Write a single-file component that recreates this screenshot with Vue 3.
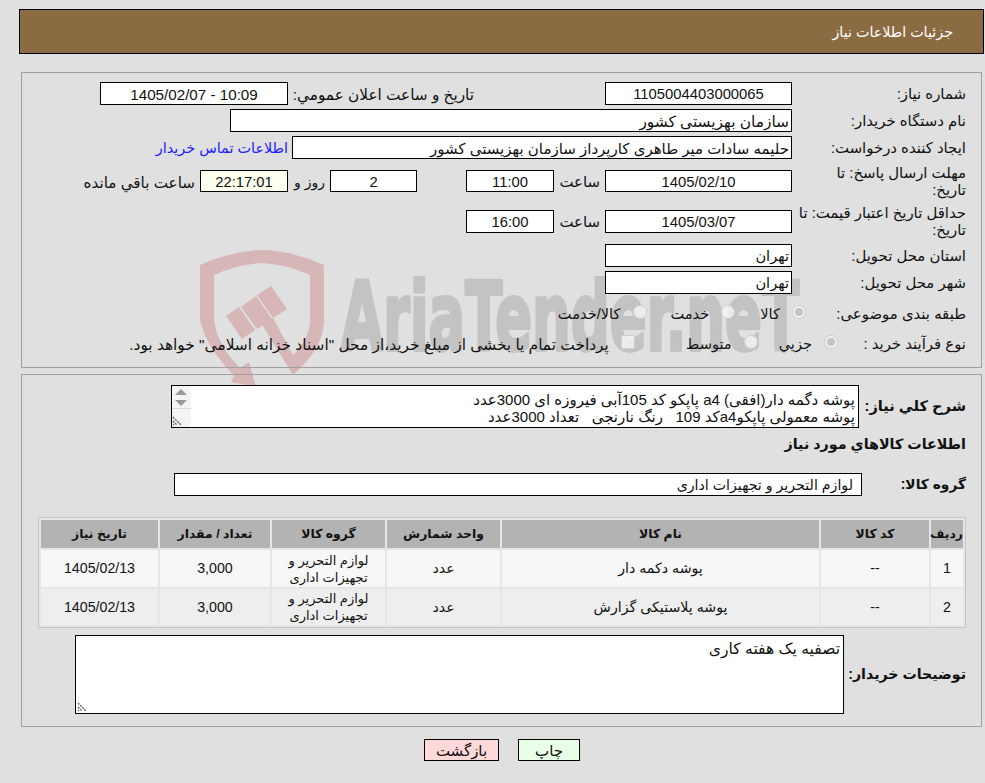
<template>
  <div class="page" dir="rtl">
    <!-- watermark sits under the form, inputs cover it -->
    <svg class="watermark" width="985" height="783" viewBox="0 0 985 783" aria-hidden="true">
      <path class="wm-shield" d="M200 265 Q232 251 262 250 Q293 251 324 265 L324 323 Q322 350 293 375 L258 318 L273 318 L293 355 Q310 338 310 320 L310 275 Q285 264 262 263 Q238 264 214 275 L214 320 Q217 345 240 368 L249 362 L256 387 L231 382 L234 376 Q205 345 200 320 Z" />
      <path class="wm-shield" d="M226 316 L239 307 L255 330 L242 339 Z M241 307 L256 296 L272 319 L257 329 Z M257 295 L271 286 L287 309 L273 318 Z" />
      <text class="wm-text" transform="translate(341 350) scale(1 1.9)" textLength="458" lengthAdjust="spacingAndGlyphs">AriaTender.neT</text>
    </svg>

    <header class="title-bar">جزئیات اطلاعات نیاز</header>

    <section class="panel panel-top">
      <div class="row">
        <div class="label">شماره نیاز:</div>
        <div class="field f-187 center num">1105004403000065</div>
        <div class="label-public">تاریخ و ساعت اعلان عمومي:</div>
        <div class="field f-188 center num-wide" dir="ltr">1405/02/07 - 10:09</div>
      </div>
      <div class="row">
        <div class="label">نام دستگاه خریدار:</div>
        <div class="field f-562 big">سازمان بهزیستی کشور</div>
      </div>
      <div class="row">
        <div class="label">ایجاد کننده درخواست:</div>
        <div class="field f-500">حلیمه سادات میر طاهری کارپرداز سازمان بهزیستی کشور</div>
        <a class="contact" href="#">اطلاعات تماس خریدار</a>
      </div>
      <div class="row row-tall">
        <div class="label">مهلت ارسال پاسخ: تا<br />تاریخ:</div>
        <div class="field f-187 center short num">1405/02/10</div>
        <div class="hour">ساعت</div>
        <div class="field f-88 center short num">11:00</div>
        <div class="field f-87 center short days num">2</div>
        <div class="day-text">روز و</div>
        <div class="field f-88 center short timer num">22:17:01</div>
        <div class="left-text">ساعت باقي مانده</div>
      </div>
      <div class="row row-tall row-tall-last">
        <div class="label">حداقل تاریخ اعتبار قیمت: تا<br />تاریخ:</div>
        <div class="field f-187 center num">1405/03/07</div>
        <div class="hour">ساعت</div>
        <div class="field f-88 center num">16:00</div>
      </div>
      <div class="row">
        <div class="label">استان محل تحویل:</div>
        <div class="field f-187 city">تهران</div>
      </div>
      <div class="row">
        <div class="label">شهر محل تحویل:</div>
        <div class="field f-187 city">تهران</div>
      </div>
      <div class="row row-check">
        <div class="label label-cat">طبقه بندی موضوعی:</div>
        <span class="radio on"></span><span class="opt">کالا</span>
        <span class="radio cat-2"></span><span class="opt">خدمت</span>
        <span class="radio cat-3"></span><span class="opt opt-both">کالا/خدمت</span>
      </div>
      <div class="row row-check">
        <div class="label label-buy">نوع فرآیند خرید :</div>
        <span class="radio on"></span><span class="opt">جزيي</span>
        <span class="radio buy-2"></span><span class="opt">متوسط</span>
        <span class="check"></span><span class="opt pay-note">پرداخت تمام یا بخشی از مبلغ خرید،از محل "اسناد خزانه اسلامی" خواهد بود.</span>
      </div>
    </section>

    <section class="panel panel-bottom">
      <div class="desc-row">
        <div class="strong-label desc-label">شرح كلي نياز:</div>
        <div class="area desc-area">
          <div class="area-text">
            <div>پوشه دگمه دار(افقی) a4 پاپکو کد 105آبی فیروزه ای 3000عدد</div>
            <div>پوشه معمولی پاپکوa4کد 109&nbsp;&nbsp; رنگ نارنجی&nbsp;&nbsp; تعداد 3000عدد</div>
          </div>
          <div class="fake-scroll">
            <span class="arrow-up"></span>
            <span class="arrow-down"></span>
            <svg class="grip" width="12" height="10" viewBox="0 0 12 10"><path d="M1 1 L9 9 M1 5 L5 9 M1 8 L2 9" stroke="#666" stroke-width="1.4" stroke-dasharray="2 1" fill="none" /></svg>
          </div>
        </div>
      </div>
      <div class="strong-label section-title">اطلاعات کالاهاي مورد نياز</div>
      <div class="group-row">
        <div class="strong-label group-label">گروه کالا:</div>
        <div class="field group-field">لوازم التحریر و تجهیزات اداری</div>
      </div>

      <table class="items">
        <colgroup>
          <col v-for="w in colWidths" :key="w.id" :style="{ width: w.px + 'px' }" />
        </colgroup>
        <thead>
          <tr>
            <th v-for="h in headers" :key="h">{{ h }}</th>
          </tr>
        </thead>
        <tbody>
          <tr v-for="item in items" :key="item.no">
            <td>{{ item.no }}</td>
            <td>--</td>
            <td>{{ item.name }}</td>
            <td>عدد</td>
            <td class="group-cell">لوازم التحریر و تجهیزات اداری</td>
            <td>3,000</td>
            <td>1405/02/13</td>
          </tr>
        </tbody>
      </table>

      <div class="notes-row">
        <div class="strong-label notes-label">توضیحات خریدار:</div>
        <div class="area notes-area">
          تصفیه یک هفته کاری
          <svg class="grip notes-grip" width="12" height="10" viewBox="0 0 12 10"><path d="M1 1 L9 9 M1 5 L5 9 M1 8 L2 9" stroke="#666" stroke-width="1.4" stroke-dasharray="2 1" fill="none" /></svg>
        </div>
      </div>
    </section>

    <div class="actions">
      <button class="btn btn-print" type="button">چاپ</button>
      <button class="btn btn-back" type="button">بازگشت</button>
    </div>
  </div>
</template>

<script setup>
const colWidths = [
  { id: 'no', px: 32 },
  { id: 'code', px: 108 },
  { id: 'name', px: 317 },
  { id: 'unit', px: 113 },
  { id: 'group', px: 113 },
  { id: 'qty', px: 110 },
  { id: 'date', px: 117 }
]

const headers = ['ردیف', 'کد کالا', 'نام کالا', 'واحد شمارش', 'گروه کالا', 'تعداد / مقدار', 'تاریخ نیاز']

const items = [
  { no: 1, name: 'پوشه دکمه دار' },
  { no: 2, name: 'پوشه پلاستیکی گزارش' }
]
</script>

<style>
html,
body {
  margin: 0;
  background: #e0e0e0;
}
</style>

<style scoped>
.page {
  position: relative;
  width: 985px;
  height: 783px;
  overflow: hidden;
  background: #e0e0e0;
  font-family: "Liberation Sans", "DejaVu Sans", sans-serif;
  font-size: 14.9px;
  line-height: 17px;
  color: #111;
  box-sizing: border-box;
  padding-top: 9px;
}

.watermark {
  position: absolute;
  top: 0;
  left: 0;
}

.wm-shield {
  fill: #d6b6b6;
}

.wm-text {
  fill: #c3c3c3;
  stroke: #c3c3c3;
  stroke-width: 2px;
  stroke-linejoin: round;
  direction: ltr;
  font-family: "DejaVu Sans", sans-serif;
  font-weight: bold;
  font-size: 50px;
}

.title-bar {
  position: relative;
  box-sizing: border-box;
  height: 45px;
  margin: 0 1px 0 19px;
  padding: 0 30px 0 0;
  background: #8b6c42;
  border: 1px solid #000;
  color: #fff;
  font-size: 14.3px;
  line-height: 44px;
}

.panel {
  position: relative;
  box-sizing: border-box;
  width: 961px;
  margin-right: 3px;
  border: 1px solid #a0a0a0;
  padding-right: 15px;
}

.panel-top {
  height: 296px;
  margin-top: 18px;
  padding-top: 9px;
}

.panel-bottom {
  height: 353px;
  margin-top: 6px;
  padding-top: 10px;
}

.row {
  display: flex;
  align-items: center;
  min-height: 23px;
  margin-bottom: 4px;
}

.row-tall {
  height: 36px;
}

.row-tall-last {
  margin-bottom: 5px;
}

.row-check {
  height: 30px;
  margin-bottom: 0;
}

.label {
  flex: none;
  box-sizing: border-box;
  width: 174px;
  padding-top: 2px;
  white-space: nowrap;
}

.label-cat {
  width: 160px;
}

.label-buy {
  width: 128px;
}

.field {
  flex: none;
  box-sizing: border-box;
  height: 23px;
  background: #fff;
  border: 1px solid #000;
  padding: 0 2px;
  line-height: 23px;
  white-space: nowrap;
  overflow: hidden;
}

.short {
  height: 22px;
  line-height: 22px;
}

.center {
  text-align: center;
}

.num {
  font-size: 14.8px;
}

.num-wide {
  font-size: 15.2px;
}

.big {
  font-size: 15.4px;
}

.city {
  font-size: 14.6px;
}

.f-187 {
  width: 187px;
}

.f-188 {
  width: 188px;
}

.f-562 {
  width: 562px;
}

.f-500 {
  width: 500px;
  font-size: 15px;
}

.f-88 {
  width: 88px;
}

.f-87 {
  width: 87px;
}

.label-public {
  width: 317px;
  box-sizing: border-box;
  padding-right: 131px;
  padding-top: 2px;
  font-size: 15.3px;
  white-space: nowrap;
}

.contact {
  margin-right: 4px;
  padding-top: 2px;
  color: #2020ff;
  font-size: 14.4px;
  text-decoration: none;
  white-space: nowrap;
}

.hour {
  width: 51px;
  box-sizing: border-box;
  padding-right: 5px;
  padding-top: 2px;
}

.days {
  margin-right: 49px;
}

.timer {
  background: #fffff0;
}

.day-text {
  width: 42px;
  box-sizing: border-box;
  padding-right: 5px;
  padding-top: 2px;
  font-size: 14px;
}

.left-text {
  padding-right: 5px;
  padding-top: 2px;
  font-size: 15.2px;
  white-space: nowrap;
}

.radio,
.check {
  flex: none;
  box-sizing: border-box;
  width: 14px;
  height: 14px;
  margin-top: -2px;
  background: rgba(245, 245, 245, 0.8);
  border: 1px solid #cfcfcf;
}

.radio {
  position: relative;
  border-radius: 50%;
}

.radio.on::after {
  content: "";
  position: absolute;
  top: 2px;
  left: 2px;
  width: 8px;
  height: 8px;
  border-radius: 50%;
  background: #c4c4c4;
}

.check {
  border-radius: 2px;
  margin-right: 51px;
}

.opt {
  margin-top: 3px;
  margin-right: 12px;
  font-size: 14.6px;
  white-space: nowrap;
}

.opt-both {
  margin-right: 13px;
}

.pay-note {
  font-size: 15.4px;
}

.cat-2 {
  margin-right: 25px;
}

.cat-3 {
  margin-right: 23px;
}

.buy-2 {
  margin-right: 21px;
}

.strong-label {
  font-weight: bold;
  white-space: nowrap;
}

.desc-row,
.group-row,
.notes-row {
  display: flex;
  align-items: center;
}

.desc-label {
  width: 107px;
  font-size: 14.6px;
}

.area {
  position: relative;
  box-sizing: border-box;
  background: #fff;
  border: 1px solid #000;
}

.desc-area {
  display: flex;
  width: 688px;
  height: 43px;
}

.area-text {
  flex: 1;
  padding: 5px 3px 0 0;
  font-size: 15px;
  white-space: nowrap;
  overflow: hidden;
}

.fake-scroll {
  position: relative;
  flex: none;
  width: 19px;
  background: #f4f4f4;
}

.fake-scroll::before {
  content: "";
  position: absolute;
  top: 22px;
  left: 0;
  right: 0;
  border-top: 1px solid #d8d8d8;
}

.arrow-up,
.arrow-down {
  position: absolute;
  left: 3px;
  width: 0;
  height: 0;
  border-left: 6px solid transparent;
  border-right: 6px solid transparent;
}

.arrow-up {
  top: 3px;
  border-bottom: 6px solid #999;
}

.arrow-down {
  top: 14px;
  border-top: 6px solid #999;
}

.grip {
  position: absolute;
  left: 0;
  bottom: 1px;
}

.section-title {
  margin-top: 8px;
  height: 17px;
  font-size: 14.3px;
}

.group-row {
  margin-top: 20px;
}

.group-label {
  width: 104px;
  font-size: 13.8px;
}

.group-field {
  width: 688px;
  padding-right: 8px;
  font-size: 14.2px;
}

.items {
  box-sizing: border-box;
  width: 928px;
  margin: 21px 0 0;
  table-layout: fixed;
  border-collapse: separate;
  border-spacing: 2px;
  background: #e6e6e6;
  border: 1px solid #c4c4c4;
  font-size: 14.2px;
}

.items th {
  height: 28px;
  padding: 0;
  background: #b3b3b3;
  font-size: 12.4px;
  font-weight: bold;
  text-align: center;
}

.items td {
  height: 37px;
  padding: 0;
  background: #f7f7f7;
  text-align: center;
}

.items tbody tr:nth-child(2) td {
  height: 36px;
  background: #eee;
}

.items .group-cell {
  padding: 0 10px;
  font-size: 13px;
}

.notes-row {
  margin-top: 7px;
}

.notes-label {
  width: 122px;
  font-size: 14.2px;
}

.notes-area {
  width: 769px;
  height: 79px;
  padding: 4px 3px 0 0;
  font-size: 15.6px;
}

.notes-grip {
  left: 1px;
}

.actions {
  position: relative;
  display: flex;
  justify-content: center;
  gap: 19px;
  margin: 12px 0 0 19px;
  direction: rtl;
}

.btn {
  box-sizing: border-box;
  height: 22px;
  padding: 0;
  border: 1px solid #000;
  font: inherit;
  font-size: 15px;
  color: #111;
}

.btn-print {
  width: 62px;
  background: #e8ffe8;
}

.btn-back {
  width: 75px;
  background: #ffd9d9;
}
</style>
